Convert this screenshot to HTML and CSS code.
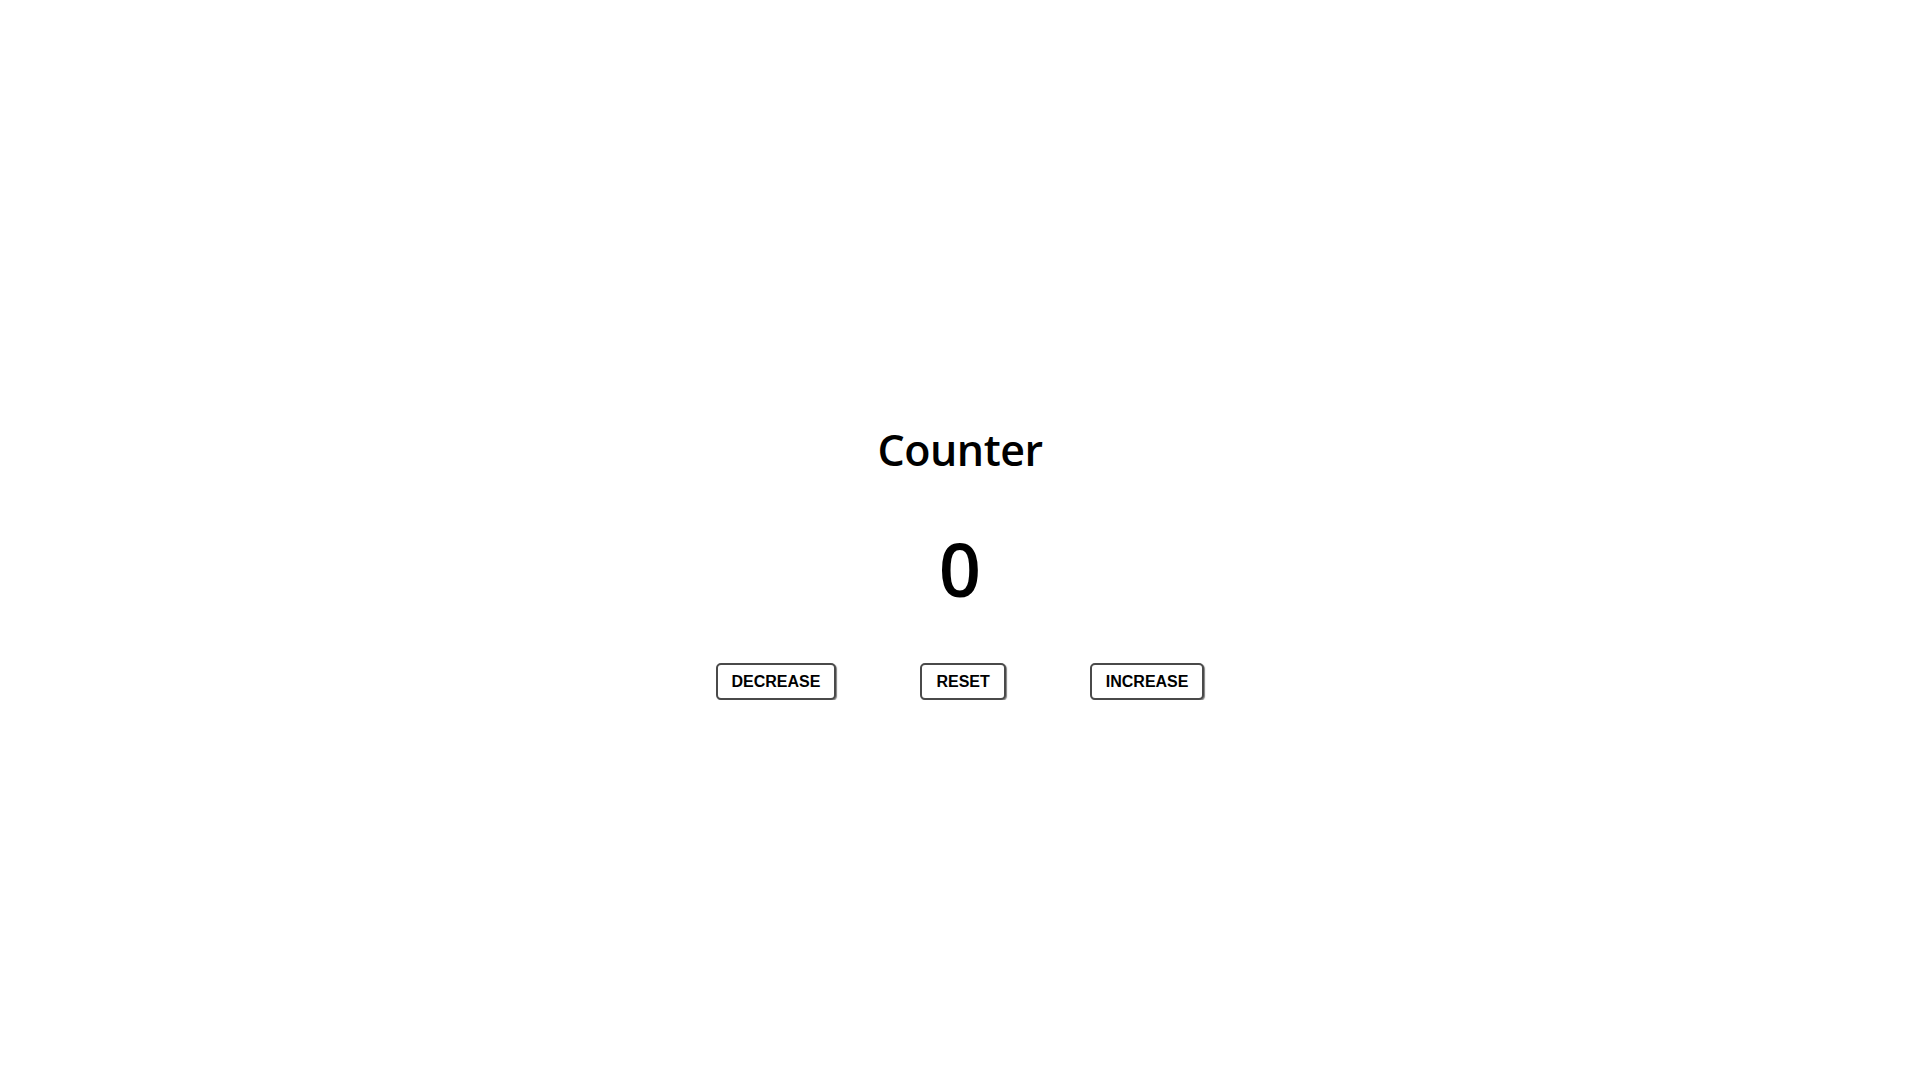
FILE: index.html
```html
<!DOCTYPE html>
<html lang="en">
<head>
<meta charset="UTF-8">
<title>Counter</title>
<link rel="stylesheet" href="styles.css">
</head>
<body>
<main class="counter">
  <h1 class="counter-title">Counter</h1>
  <span class="counter-value">0</span>
  <div class="counter-buttons">
    <button class="btn">decrease</button>
    <button class="btn">reset</button>
    <button class="btn">increase</button>
  </div>
</main>
</body>
</html>
```
FILE: styles.css
```css
html, body {
  margin: 0;
  padding: 0;
  background: #ffffff;
}
.counter {
  display: flex;
  flex-direction: column;
  align-items: center;
  padding-top: 420px;
  font-family: "Open Sans", "Noto Sans", sans-serif;
  color: #000;
}
.counter-title {
  margin: 0;
  font-size: 43px;
  font-weight: 600;
  line-height: 60px;
  letter-spacing: -0.5px;
}
.counter-value {
  display: block;
  margin-top: 44px;
  font-size: 74px;
  font-weight: 600;
  line-height: 90px;
}
.counter-buttons {
  display: flex;
  gap: 84px;
  margin-top: 49px;
}
.btn {
  font-family: "Liberation Sans", Arial, sans-serif;
  font-weight: 700;
  font-size: 16px;
  line-height: 19px;
  text-transform: uppercase;
  color: #000;
  background: #fff;
  border: 2px solid #4a4a4a;
  border-radius: 5px;
  padding: 7px 14px;
  box-shadow: 1px 1px 1px rgba(0, 0, 0, 0.5);
  cursor: pointer;
}
```
